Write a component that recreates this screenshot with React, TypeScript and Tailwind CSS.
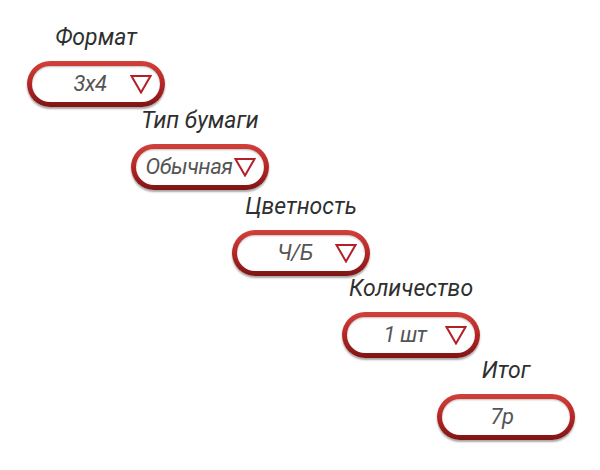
const steps = [
  { label: "Формат", value: "3x4", arrow: true, wrap: "ml-[27px] mt-[26px]", pad: "pr-3" },
  { label: "Тип бумаги", value: "Обычная", arrow: true, wrap: "ml-[131px] mt-[2px]", pad: "pr-[22px]" },
  { label: "Цветность", value: "Ч/Б", arrow: true, wrap: "ml-[232px] mt-[5px]", pad: "pr-3" },
  { label: "Количество", value: "1 шт", arrow: true, wrap: "ml-[342px] mt-[1px]", pad: "pr-3" },
  { label: "Итог", value: "7р", arrow: false, wrap: "ml-[437px] mt-[1px]", pad: "pr-2" },
];

function Arrow() {
  return (
    <svg width="22" height="20" viewBox="0 0 22 20" className="absolute right-[13px] top-1/2 -translate-y-1/2">
      <polygon points="1.5,2 20.5,2 11,18.5" fill="none" stroke="#b3202a" strokeWidth="2" strokeLinejoin="miter" />
    </svg>
  );
}

function Pill({ value, arrow, pad }: { value: string; arrow: boolean; pad: string }) {
  return (
    <div className="relative h-[46px] w-[138px] rounded-full bg-gradient-to-b from-[#d2403b] via-[#b52625] to-[#7e1414] p-[5px] shadow-[0_2px_2px_rgba(0,0,0,0.35)]">
      <div className={`flex h-full w-full items-center justify-center rounded-full bg-white shadow-[inset_0_1px_2px_rgba(0,0,0,0.25)] ${pad}`}>
        <span className="text-[22px] italic leading-none tracking-[-0.5px] text-[#555]">{value}</span>
      </div>
      {arrow && <Arrow />}
    </div>
  );
}

export default function App() {
  return (
    <div className="h-[470px] w-[600px] overflow-hidden bg-white font-['Roboto',sans-serif]">
      <div className="flex flex-col">
        {steps.map((s) => (
          <div key={s.label} className={`flex w-[138px] flex-col items-center ${s.wrap}`}>
            <div className="h-[24px] whitespace-nowrap text-[23px] italic leading-[24px] text-[#2f2f2f]">{s.label}</div>
            <div className="mt-[11px]">
              <Pill value={s.value} arrow={s.arrow} pad={s.pad} />
            </div>
          </div>
        ))}
      </div>
    </div>
  );
}
